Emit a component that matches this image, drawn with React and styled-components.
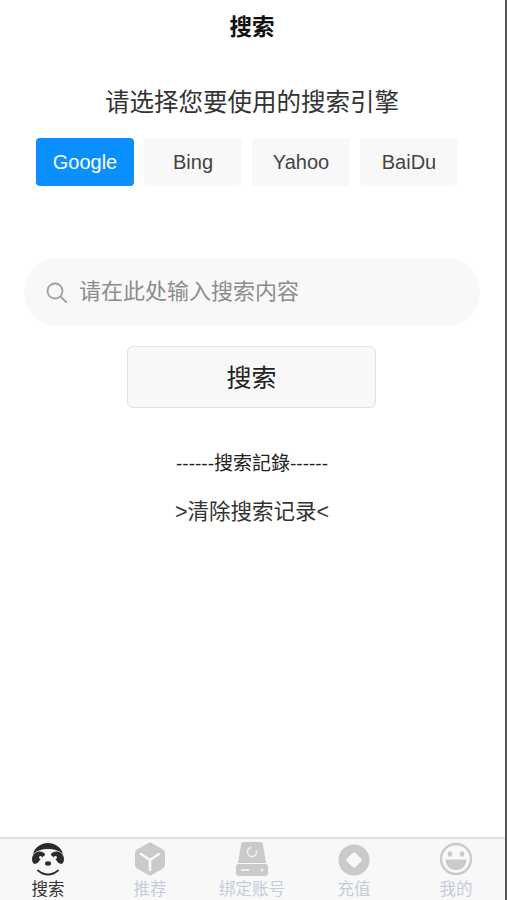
import React from 'react';
import styled, { createGlobalStyle } from 'styled-components';

const GlobalStyle = createGlobalStyle`
	html, body {
		margin: 0;
		padding: 0;
		background: #fff;
	}
	body {
		font-family: "Liberation Sans", "Noto Sans CJK SC", sans-serif;
	}
`;

const Page = styled.div`
	box-sizing: border-box;
	width: 507px;
	height: 900px;
	border-right: 2px solid #555;
	display: flex;
	flex-direction: column;
	overflow: hidden;
`;

const Main = styled.main`
	flex: 1;
	display: flex;
	flex-direction: column;
	align-items: center;
`;

const Title = styled.h1`
	margin: 14px 1px 0 0;
	font-size: 22.5px;
	line-height: 28px;
	font-weight: 700;
	color: #111;
`;

const Prompt = styled.p`
	margin: 46px 1px 0 0;
	font-size: 24.5px;
	line-height: 30px;
	color: #333;
`;

const Engines = styled.div`
	display: flex;
	gap: 10px;
	margin: 20px 0 0;
	align-self: flex-start;
	padding-left: 36px;
`;

const Engine = styled.button`
	width: 98px;
	height: 48px;
	padding: 0;
	border: 0;
	border-radius: 4px;
	font-family: inherit;
	font-size: 20px;
	background: ${(p) => (p.$active ? '#0a8fff' : '#f8f8f8')};
	color: ${(p) => (p.$active ? '#fff' : '#444')};
`;

const SearchBar = styled.div`
	box-sizing: border-box;
	width: 456px;
	height: 68px;
	margin: 72px 0 0 24px;
	align-self: flex-start;
	padding-left: 22px;
	display: flex;
	align-items: center;
	gap: 12px;
	border-radius: 34px;
	background: #f8f8f8;
`;

const SearchInput = styled.input`
	flex: 1;
	min-width: 0;
	border: 0;
	outline: 0;
	background: transparent;
	font-family: inherit;
	font-size: 22px;
	padding: 0;
	&::placeholder {
		color: #8c8c8c;
		opacity: 1;
	}
`;

const SearchButton = styled.button`
	box-sizing: border-box;
	width: 249px;
	height: 62px;
	margin: 20px 2px 0 0;
	padding: 0 0 2px;
	border: 1px solid #e2e2e2;
	border-radius: 6px;
	background: #f8f8f8;
	font-family: inherit;
	font-size: 25px;
	color: #222;
`;

const HistoryTitle = styled.div`
	margin: 44px 1px 0 0;
	font-size: 19px;
	line-height: 24px;
	color: #222;
`;

const ClearLink = styled.a`
	margin: 22px 1px 0 0;
	font-size: 21.5px;
	line-height: 28px;
	color: #333;
`;

const TabBar = styled.nav`
	box-sizing: border-box;
	height: 63px;
	padding: 3px 16px 0 15px;
	display: flex;
	justify-content: space-between;
	border-top: 2px solid #dedede;
	background: #f8f8f8;
`;

const Tab = styled.div`
	width: 66px;
	display: flex;
	flex-direction: column;
	align-items: center;
	gap: 2px;
	font-size: 16.5px;
	line-height: 22px;
	white-space: nowrap;
	color: ${(p) => (p.$active ? '#333' : '#c4ccdb')};
`;

const SearchIcon = () => (
	<svg width="21" height="21" viewBox="0 0 21 21" fill="none" stroke="#a0a0a0" strokeWidth="1.800">
		<circle cx="9" cy="9" r="7.500" />
		<path d="M14.500 14.500L20 20" strokeLinecap="round" />
	</svg>
);

const SlothIcon = () => (
	<svg width="34" height="34" viewBox="0 0 34 34">
		<path d="M2 12C4 5 10 1 17 1s13 4 15 11c-3-3-9-5-15-5S5 9 2 12z" fill="#2b2b2b" />
		<path d="M1 17c0-3 2-6 5-7 3-1 7 0 8 2 .5 1-1 2-2.500 3-2 1.500-3 4-5 6-1 .8-3 1-4 .500C1.500 20 1 19 1 17z" fill="#2b2b2b" />
		<path d="M33 17c0-3-2-6-5-7-3-1-7 0-8 2-.5 1 1 2 2.500 3 2 1.500 3 4 5 6 1 .8 3 1 4 .500C32.500 20 33 19 33 17z" fill="#2b2b2b" />
		<circle cx="9.500" cy="15.500" r="1.400" fill="#f8f8f8" />
		<circle cx="24.500" cy="15.500" r="1.400" fill="#f8f8f8" />
		<ellipse cx="17" cy="21.500" rx="3" ry="2.200" fill="#2b2b2b" />
		<path d="M7 28.500c3 2.500 6.500 4 10 4s7-1.500 10-4" fill="none" stroke="#2b2b2b" strokeWidth="1.800" strokeLinecap="round" />
	</svg>
);

const CubeIcon = () => (
	<svg width="34" height="34" viewBox="0 0 34 34">
		<path d="M15 1.200a4 4 0 0 1 4 0l11 6.300a4 4 0 0 1 2 3.500v12a4 4 0 0 1-2 3.500l-11 6.300a4 4 0 0 1-4 0L4 26.500a4 4 0 0 1-2-3.500V11a4 4 0 0 1 2-3.500z" fill="#cacaca" />
		<path d="M8 12l9 6 9-6M17 18v10" fill="none" stroke="#f8f8f8" strokeWidth="2.600" strokeLinecap="round" />
	</svg>
);

const DriveIcon = () => (
	<svg width="34" height="34" viewBox="0 0 34 34">
		<path d="M6 3a3 3 0 0 1 3-3h16a3 3 0 0 1 3 3l3 18H3z" fill="#cacaca" />
		<rect x="1" y="22" width="32" height="12" rx="3" fill="#cacaca" />
		<circle cx="17" cy="10" r="4.500" fill="none" stroke="#f0f0f0" strokeWidth="1.500" strokeDasharray="20 6" />
		<rect x="6" y="27" width="8" height="2" fill="#f0f0f0" />
		<circle cx="27" cy="28" r="1.500" fill="#f0f0f0" />
	</svg>
);

const CoinIcon = () => (
	<svg width="34" height="34" viewBox="0 0 34 34">
		<circle cx="17" cy="18" r="15.500" fill="#cacaca" />
		<rect x="11" y="12" width="12" height="12" rx="2" transform="rotate(45 17 18)" fill="#f8f8f8" />
	</svg>
);

const SmileIcon = () => (
	<svg width="34" height="34" viewBox="0 0 34 34">
		<circle cx="17" cy="17" r="15" fill="none" stroke="#cacaca" strokeWidth="2.400" />
		<ellipse cx="11" cy="12" rx="2.200" ry="2.800" fill="#cacaca" />
		<ellipse cx="23" cy="12" rx="2.200" ry="2.800" fill="#cacaca" />
		<path d="M6.500 17.500h21C27.500 24 22.500 28 17 28S6.500 24 6.500 17.500z" fill="#cacaca" />
	</svg>
);

const engines = ['Google', 'Bing', 'Yahoo', 'BaiDu'];

const tabs = [
	{ label: '搜索', icon: <SlothIcon />, active: true },
	{ label: '推荐', icon: <CubeIcon /> },
	{ label: '绑定账号', icon: <DriveIcon /> },
	{ label: '充值', icon: <CoinIcon /> },
	{ label: '我的', icon: <SmileIcon /> },
];

export default function App() {
	return (
		<Page>
			<GlobalStyle />
			<Main>
				<Title>搜索</Title>
				<Prompt>请选择您要使用的搜索引擎</Prompt>
				<Engines>
					{engines.map((name, i) => (
						<Engine key={name} $active={i === 0}>
							{name}
						</Engine>
					))}
				</Engines>
				<SearchBar>
					<SearchIcon />
					<SearchInput placeholder="请在此处输入搜索内容" />
				</SearchBar>
				<SearchButton>搜索</SearchButton>
				<HistoryTitle>------搜索記錄------</HistoryTitle>
				<ClearLink>&gt;清除搜索记录&lt;</ClearLink>
			</Main>
			<TabBar>
				{tabs.map((tab) => (
					<Tab key={tab.label} $active={tab.active}>
						{tab.icon}
						{tab.label}
					</Tab>
				))}
			</TabBar>
		</Page>
	);
}
